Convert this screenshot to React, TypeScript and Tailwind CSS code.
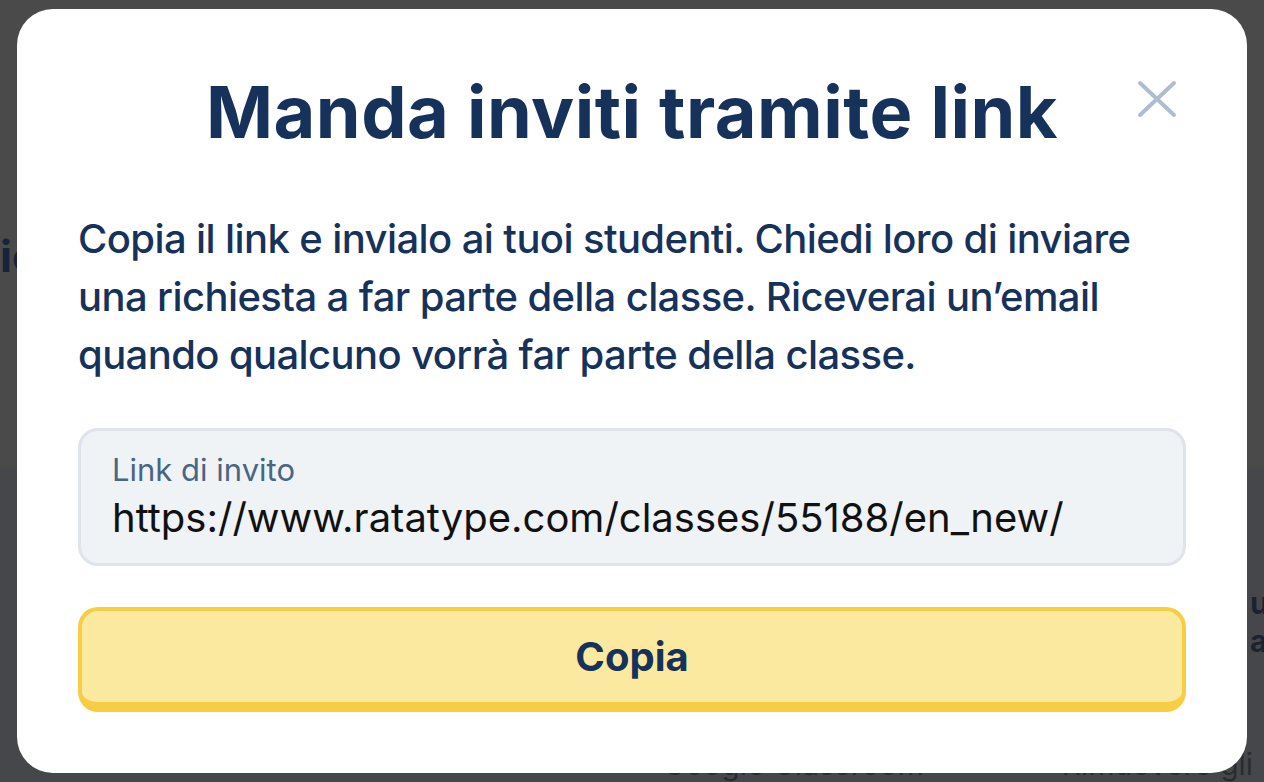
const FONT = "font-['Inter',_'Noto_Sans',_sans-serif]";

function Backdrop() {
  return (
    <div className="flex h-full w-full flex-col">
      <div className="flex h-[500px] flex-col bg-[#4a4a4a]">
        <div className="pt-[226px] text-[44px] font-bold leading-[60px] text-[#16233b]">
          ic
        </div>
      </div>
      <div className="flex flex-1 flex-col bg-[#46474a]">
        <div className="flex justify-end pt-[116px]">
          <div className="w-[17px] overflow-hidden pl-[3px] text-[30px] font-bold leading-[38px] text-[#1b2330]">
            <div>u</div>
            <div>a</div>
          </div>
        </div>
        <div className="flex pt-[86px] text-[30px] leading-[36px] text-[#2a2c30]">
          <span className="pl-[663px]">Google Classroom</span>
          <span className="pl-[138px] whitespace-nowrap">Rimuovere gli</span>
        </div>
      </div>
    </div>
  );
}

function CloseIcon() {
  return (
    <svg width="40" height="38" viewBox="0 0 40 38" fill="none">
      <path d="M3 3 L37 35 M37 3 L3 35" stroke="currentColor" strokeWidth="4" strokeLinecap="round" />
    </svg>
  );
}

export default function App() {
  return (
    <div className={`relative h-[782px] w-[1264px] overflow-hidden ${FONT}`}>
      <Backdrop />

      <div className="absolute left-[17px] top-[9px] flex h-[764px] w-[1230px] flex-col rounded-[36px] bg-white px-[61px] pt-[59px]">
        <button className="absolute right-[70px] top-[71px] text-[#aebdd0]">
          <CloseIcon />
        </button>

        <h1 className="text-center text-[72px] font-bold leading-[88px] tracking-[0.5px] text-[#17325a]">
          Manda inviti tramite link
        </h1>

        <p className="mt-[54px] text-[40px] font-medium leading-[58px] tracking-[-0.6px] text-[#17325a]">
          <span className="block">Copia il link e invialo ai tuoi studenti. Chiedi loro di inviare</span>
          <span className="block">una richiesta a far parte della classe. Riceverai un’email</span>
          <span className="block">quando qualcuno vorrà far parte della classe.</span>
        </p>

        <div className="mt-[44px] flex h-[138px] flex-col rounded-[20px] border-[3px] border-[#dee4ea] bg-[#eff3f6] px-[31px] pt-[19px]">
          <span className="text-[31px] leading-[40px] text-[#4a6580]">Link di invito</span>
          <span className="mt-[4px] text-[40px] leading-[48px] text-[#111111]">
            https://www.ratatype.com/classes/55188/en_new/
          </span>
        </div>

        <button className="mt-[41px] flex h-[105px] items-center justify-center rounded-[20px] border-x-[4px] border-t-[4px] border-b-[10px] border-[#f7cd45] bg-[#fae99f] text-[40px] font-bold text-[#17325a]">
          Copia
        </button>
      </div>
    </div>
  );
}
